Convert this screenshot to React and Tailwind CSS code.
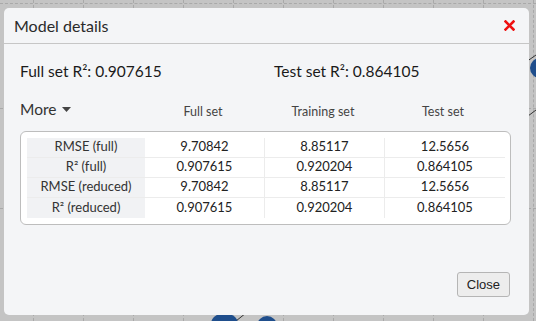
const ROWS = [
  ["RMSE (full)", "9.70842", "8.85117", "12.5656"],
  ["R² (full)", "0.907615", "0.920204", "0.864105"],
  ["RMSE (reduced)", "9.70842", "8.85117", "12.5656"],
  ["R² (reduced)", "0.907615", "0.920204", "0.864105"],
];

function Backdrop() {
  return (
    <div className="absolute inset-0 overflow-hidden bg-[#c4c4c4]">
      <div className="absolute left-0 right-0 top-[3px] border-t border-dashed border-[#a9a9a9]" />
      <div className="absolute left-0 right-0 top-[108px] border-t border-dashed border-[#a9a9a9]" />
      <div className="absolute left-0 right-0 top-[208px] border-t border-dashed border-[#a9a9a9]" />
      {[33, 83, 133, 183, 233, 283, 333, 383, 433, 483, 533].map((x) => (
        <div
          key={x}
          className="absolute top-0 bottom-0 border-l border-dashed border-[#a9a9a9]"
          style={{ left: x }}
        />
      ))}
      <svg className="absolute left-0 top-0" width="536" height="321">
        <line x1="236" y1="321" x2="246" y2="313" stroke="#333" strokeWidth="1" />
        <line x1="536" y1="55" x2="526" y2="62" stroke="#333" strokeWidth="1" />
        <line x1="536" y1="110" x2="528" y2="116" stroke="#333" strokeWidth="1" />
        <circle cx="221" cy="324" r="10" fill="#1f4e8c" />
        <circle cx="228" cy="324" r="10" fill="#1f4e8c" />
        <circle cx="267" cy="326" r="10" fill="#1f4e8c" />
        <circle cx="540" cy="68" r="10" fill="#1f4e8c" />
      </svg>
    </div>
  );
}

export default function App() {
  return (
    <div
      className="relative h-[321px] w-[536px] overflow-hidden"
      style={{ fontFamily: "Lato, 'Noto Sans', sans-serif" }}
    >
      <Backdrop />
      <div className="absolute left-[4px] top-[8px] flex h-[307px] w-[525px] flex-col rounded-[5px] bg-[#f4f5f7] text-[#222]">
        <div className="flex h-[36px] items-center justify-between border-b border-[#c6c6c6] pl-[10px] pr-[14px]">
          <span className="text-[16px] text-[#2a2a2a]">Model details</span>
          <svg width="11" height="11" viewBox="0 0 11 11">
            <path d="M1.5 1.5 L9.5 9.5 M9.5 1.5 L1.5 9.5" stroke="#ee1111" strokeWidth="2.6" strokeLinecap="square" />
          </svg>
        </div>
        <div className="flex flex-1 flex-col px-[16px]">
          <div className="mt-[16px] flex text-[15.5px] text-[#1a1a1a]">
            <span className="w-[254px]">Full set R²: 0.907615</span>
            <span>Test set R²: 0.864105</span>
          </div>
          <div className="mt-[15px] flex items-end">
            <span className="flex w-[134px] items-center gap-[6px] text-[15.5px] text-[#333]">
              More
              <svg width="9" height="5" viewBox="0 0 9 5">
                <path d="M0 0 L9 0 L4.5 5 Z" fill="#444" />
              </svg>
            </span>
            <div className="grid flex-1 grid-cols-[120px_120px_120px] pr-[10px] text-center text-[12.5px] text-[#444]">
              <span>Full set</span>
              <span>Training set</span>
              <span>Test set</span>
            </div>
          </div>
          <div className="mt-[9px] w-[491px] rounded-[6px] border border-[#bdbdbd] bg-white px-[6px] py-[6px]">
            <div className="grid grid-cols-[118px_120px_120px_120px] text-center text-[13px] text-[#222]">
              {ROWS.map((row, i) => (
                <div key={i} className="contents">
                  {row.map((cell, j) => (
                    <div
                      key={j}
                      className={`flex h-[20px] items-center justify-center ${
                        i < ROWS.length - 1 ? "border-b border-[#ececec]" : ""
                      } ${j === 0 ? "bg-[#f1f2f4] text-[#333]" : ""} ${
                        j > 0 && j < 3 ? "border-r border-[#ececec]" : ""
                      }`}
                    >
                      {cell}
                    </div>
                  ))}
                </div>
              ))}
            </div>
          </div>
          <div className="mt-auto mb-[18px] flex justify-end pr-[3px]">
            <button
              className="h-[25px] rounded-[3px] border border-[#b5b5b5] bg-[#ededed] px-[9px] text-[13px] text-[#222]"
              style={{ fontFamily: "'Liberation Sans', Arial, sans-serif" }}
            >
              Close
            </button>
          </div>
        </div>
      </div>
    </div>
  );
}
